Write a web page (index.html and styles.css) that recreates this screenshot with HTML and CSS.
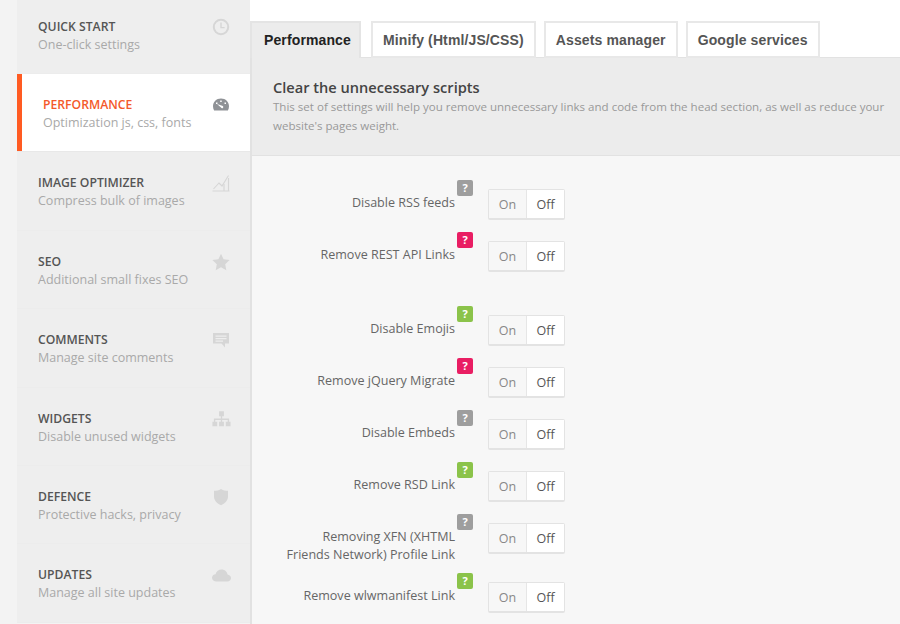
FILE: index.html
```html
<!DOCTYPE html>
<html lang="en">
<head>
<meta charset="utf-8">
<title>Performance settings</title>
<link rel="stylesheet" href="styles.css">
</head>
<body>
<div class="page">
  <nav class="sidebar">
    <a class="item"><div class="item-text"><b>QUICK START</b><span>One-click settings</span></div>
      <svg class="ico" viewBox="0 0 18 18"><circle cx="9" cy="9" r="7.2" fill="none" stroke="currentColor" stroke-width="2"/><path d="M9 4.5V9.6H12.6" fill="none" stroke="currentColor" stroke-width="1.4"/></svg></a>
    <a class="item active"><div class="item-text"><b>PERFORMANCE</b><span>Optimization js, css, fonts</span></div>
      <svg class="ico" viewBox="0 0 18 18"><path fill-rule="evenodd" d="M9 2.5C4.3 2.5 1 6 1 10.2c0 1.6.4 3 1.1 4.3h13.8c.7-1.3 1.1-2.7 1.1-4.3C17 6 13.700 2.500 9 2.500ZM9 11.500 5 8l5.200 1.800a1.200 1.200 0 1 1-1.200 1.700ZM4 6.500h1.500V8H4ZM8.200 4.500h1.500V6H8.200ZM12.500 6.500H14V8h-1.500Z"/></svg></a>
    <a class="item"><div class="item-text"><b>IMAGE OPTIMIZER</b><span>Compress bulk of images</span></div>
      <svg class="ico" viewBox="0 0 18 18"><path d="M.5 17H17.500M1.500 15 7 9l3 3 6.500-10.500" fill="none" stroke="currentColor" stroke-width="1.100"/><path d="M16.500 4v13M12 10v7" stroke="currentColor" stroke-width="1.100" fill="none"/></svg></a>
    <a class="item"><div class="item-text"><b>SEO</b><span>Additional small fixes SEO</span></div>
      <svg class="ico" viewBox="0 0 18 18"><path d="M9 .8 11.600 6.300 17.600 7.100 13.200 11.200 14.300 17.200 9 14.300 3.700 17.200 4.800 11.200.4 7.100 6.400 6.300Z"/></svg></a>
    <a class="item"><div class="item-text"><b>COMMENTS</b><span>Manage site comments</span></div>
      <svg class="ico" viewBox="0 0 18 18"><path fill-rule="evenodd" d="M1 2H17V12.500H13V16.500L9.500 12.500H1ZM3.500 4.500V5.700H14.500V4.500ZM3.500 7V8.200H14.500V7ZM3.500 9.500V10.700H11V9.500Z"/></svg></a>
    <a class="item"><div class="item-text"><b>WIDGETS</b><span>Disable unused widgets</span></div>
      <svg class="ico ico-wide" viewBox="0 0 22 18"><path d="M8.500 1H13.500V6H11.700V8.500H19V12H20.500V16.500H15.500V12H17.500V10H11.700V12H13.500V16.500H8.500V12H10.300V10H4.500V12H6.500V16.500H1.500V12H3V8.500H10.300V6H8.500Z"/></svg></a>
    <a class="item"><div class="item-text"><b>DEFENCE</b><span>Protective hacks, privacy</span></div>
      <svg class="ico" viewBox="0 0 18 18"><path d="M9 1C11.500 2.500 13.500 2.800 16 2.800V8.500C16 12.500 13 15.500 9 17.200 5 15.500 2 12.500 2 8.500V2.800C4.500 2.800 6.500 2.500 9 1Z"/></svg></a>
    <a class="item"><div class="item-text"><b>UPDATES</b><span>Manage all site updates</span></div>
      <svg class="ico ico-wide" viewBox="0 0 20 18"><path d="M5 15.500C2.500 15.500.5 14 .5 11.800.5 9.800 2 8.300 4 8.200 4.800 5.500 7.200 3.500 10.200 3.500 13.300 3.500 15.600 5.700 16 8.500 18 8.800 19.500 10.200 19.500 12.100 19.500 14 18 15.500 15.800 15.500Z"/></svg></a>
  </nav>
  <main class="main">
    <div class="tabs">
      <span class="tab current">Performance</span>
      <span class="tab">Minify (Html/JS/CSS)</span>
      <span class="tab">Assets manager</span>
      <span class="tab">Google services</span>
    </div>
    <header class="intro">
      <h1>Clear the unnecessary scripts</h1>
      <p>This set of settings will help you remove unnecessary links and code from the head section, as well as reduce your website's pages weight.</p>
    </header>
    <section class="settings">
      <div class="group">
        <div class="row"><label>Disable RSS feeds<i class="help grey">?</i></label><div class="toggle"><span>On</span><span class="off">Off</span></div></div>
        <div class="row"><label>Remove REST API Links<i class="help red">?</i></label><div class="toggle"><span>On</span><span class="off">Off</span></div></div>
      </div>
      <div class="group">
        <div class="row"><label>Disable Emojis<i class="help green">?</i></label><div class="toggle"><span>On</span><span class="off">Off</span></div></div>
        <div class="row"><label>Remove jQuery Migrate<i class="help red">?</i></label><div class="toggle"><span>On</span><span class="off">Off</span></div></div>
        <div class="row"><label>Disable Embeds<i class="help grey">?</i></label><div class="toggle"><span>On</span><span class="off">Off</span></div></div>
        <div class="row"><label>Remove RSD Link<i class="help green">?</i></label><div class="toggle"><span>On</span><span class="off">Off</span></div></div>
        <div class="row tall"><label>Removing XFN (XHTML Friends Network) Profile Link<i class="help grey">?</i></label><div class="toggle"><span>On</span><span class="off">Off</span></div></div>
        <div class="row"><label>Remove wlwmanifest Link<i class="help green">?</i></label><div class="toggle"><span>On</span><span class="off">Off</span></div></div>
      </div>
    </section>
  </main>
</div>
</body>
</html>
```
FILE: styles.css
```css
* { box-sizing: border-box; }
html, body { margin: 0; height: 100%; overflow: hidden; background: #fff; }
body { font-family: "Open Sans", "Noto Sans", sans-serif; }
.page { display: flex; width: 900px; height: 624px; overflow: hidden; }

.sidebar { flex: none; width: 250px; padding-left: 17px; background: #f3f3f3; display: flex; flex-direction: column; }
.item { flex: none; height: 78.4px; display: flex; justify-content: space-between; padding: 22px 20px 0 21px; background: #eeeeee; border-bottom: 1px solid #ececec; }
.item:first-child { height: 74px; padding-top: 18px; }
.item-text { display: flex; flex-direction: column; }
.item-text b { font-size: 12.200px; line-height: 18px; font-weight: 600; color: #555; }
.item-text span { font-size: 12.500px; line-height: 18px; color: #a9a9a9; }
.ico { width: 18px; height: 18px; color: #d6d6d6; fill: currentColor; }
.ico-wide { width: 21px; margin-right: -2px; }
.item.active { background: #fff; box-shadow: inset 5px 0 0 #ff5b22; padding-left: 26px; border-bottom-color: #e8e8e8; }
.item.active b { color: #f4592a; }
.item.active .ico { color: #8f9296; }

.main { flex: 1; min-width: 0; display: flex; flex-direction: column; background: #f7f7f7; }
.tabs { flex: none; display: flex; gap: 8px; height: 58px; padding-top: 21px; background: #fff; border-bottom: 1px solid #e2e2e2; }
.tab { height: 37px; padding: 0 10px; border: 2px solid #e8e8e8; background: #fff; font: 700 14px/35px "Liberation Sans", Arial, sans-serif; letter-spacing: .12px; color: #555; white-space: nowrap; }
.tab.current { color: #222; background: #ececec; border-color: #e4e4e4; border-bottom: 0; padding: 0 8px 0 12px; margin-right: 2px; }
.intro { flex: none; height: 98px; padding: 20px 13px 0 21px; background: #ececec; border-left: 2px solid #e2e2e2; border-bottom: 1px solid #e2e2e2; }
.intro h1 { margin: 0; font-size: 14.600px; line-height: 19px; font-weight: 600; color: #444; }
.intro p { margin: 0; font-size: 11.550px; line-height: 19px; color: #999; }

.settings { flex: 1; padding-top: 33px; border-left: 2px solid #e2e2e2; display: flex; flex-direction: column; gap: 43px; }
.group { display: flex; flex-direction: column; gap: 21px; }
.row { display: flex; align-items: flex-start; height: 31px; }
.row.tall { height: 38px; }
label { position: relative; width: 203px; margin-top: 5px; text-align: right; font-size: 12.550px; line-height: 18px; color: #666; }
.row.tall label { margin-top: 5px; padding-left: 30px; }
.help { position: absolute; right: -18px; top: -14px; width: 16px; height: 16px; border-radius: 2px; color: #fff; font: 700 11px/16px "Open Sans", sans-serif; text-align: center; }
.help.red { background: #e91e63; }
.help.green { background: #8bc34a; }
.help.grey { background: #9e9e9e; }
.toggle { flex: none; display: flex; width: 77px; height: 31px; margin-left: 33px; border: 1px solid #e3e3e3; border-bottom-width: 2px; border-radius: 2px; background: #fff; font-size: 12.500px; line-height: 29px; text-align: center; }
.toggle span { flex: 1; color: #888; background: #f7f7f7; }
.toggle .off { color: #555; background: #fff; border-left: 1px solid #e6e6e6; }
```
